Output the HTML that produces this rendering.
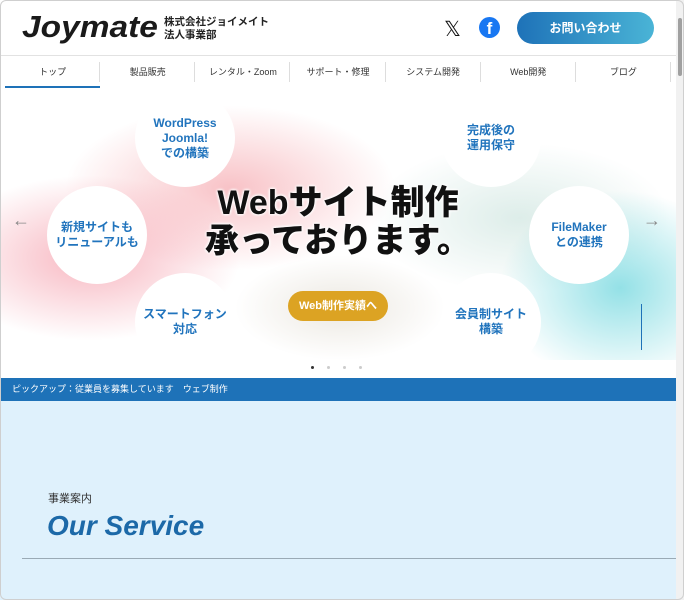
<!DOCTYPE html>
<html><head><meta charset="utf-8"><style>
*{margin:0;padding:0;box-sizing:border-box}
body{width:684px;height:600px;overflow:hidden;background:#fff;font-family:"Liberation Sans","Noto Sans CJK JP",sans-serif;position:relative}
.frame{position:absolute;inset:0;border:1px solid #cfcfcf;border-radius:6px;pointer-events:none;z-index:20}
.sb{position:absolute;right:0;top:0;width:8px;height:600px;background:#f1f1f1;z-index:10}
.sb i{position:absolute;left:2px;top:18px;width:4px;height:58px;background:#a0a0a0;border-radius:2px}
header{position:absolute;left:0;top:0;width:676px;height:56px;border-bottom:1px solid #e2e2e2}
.logo{position:absolute;left:22px;top:9px;font:italic 900 31px "Liberation Sans",sans-serif;letter-spacing:0;color:#1a1a1a;transform:scaleX(1.08);transform-origin:left}
.sub{position:absolute;left:164px;top:16px;font-size:10.5px;line-height:13px;color:#222;font-weight:bold}
.x{position:absolute;left:444px;top:17px;font-size:21px;color:#111}
.fb{position:absolute;left:479px;top:17px;width:21px;height:21px;border-radius:50%;background:#1877f2;color:#fff;font:bold 17px "Liberation Sans";text-align:center;line-height:24px;overflow:hidden}
.btn{position:absolute;left:517px;top:12px;width:137px;height:32px;border-radius:16px;background:linear-gradient(90deg,#1e72b8,#4ab4d6);color:#fff;font-size:12px;font-weight:bold;text-align:center;line-height:32px}
nav{position:absolute;left:5px;top:57px;width:666px;height:31px;display:flex}
nav div{flex:1;text-align:center;font-size:9px;color:#333;line-height:30px;position:relative}
nav div:after{content:"";position:absolute;right:0;top:5px;height:20px;border-right:1px solid #ddd}
nav div.on{border-bottom:2px solid #1e72b8}
.hero{position:absolute;left:0;top:88px;width:676px;height:272px;overflow:hidden;background:
radial-gradient(ellipse 200px 110px at 90px 170px,rgba(240,110,130,.5),transparent 75%),
radial-gradient(ellipse 220px 110px at 230px 100px,rgba(240,120,130,.45),transparent 75%),
radial-gradient(ellipse 160px 130px at 620px 200px,rgba(60,200,210,.55),transparent 75%),
radial-gradient(ellipse 200px 100px at 520px 130px,rgba(170,210,200,.4),transparent 75%),
radial-gradient(ellipse 140px 70px at 340px 220px,rgba(200,190,170,.35),transparent 75%),#fff}
.c{position:absolute;width:100px;height:98px;border-radius:50%;background:#fff;color:#2174bd;font-weight:bold;font-size:12px;line-height:15px;text-align:center;display:flex;align-items:center;justify-content:center}
.ttl{position:absolute;left:0;width:676px;top:96px;text-align:center;font-size:34px;font-weight:900;line-height:38px;color:#111;text-shadow:0 0 3px #fff,0 0 3px #fff,0 0 3px #fff}
.wb{position:absolute;left:288px;top:203px;width:100px;height:30px;border-radius:15px;background:#dca323;color:#fff;font-size:11px;font-weight:bold;text-align:center;line-height:30px}
.ar{position:absolute;top:122px;color:#888;font-size:18px}
.dots{position:absolute;top:366px;left:311px;font-size:0}
.dots i{display:inline-block;width:3px;height:3px;border-radius:50%;background:#ccc;margin-right:13px}
.dots i:first-child{background:#333}
.pick{position:absolute;left:0;top:378px;width:676px;height:23px;background:#1e72b8;color:#fff;font-size:9px;line-height:22px;padding-left:12px}
.svc{position:absolute;left:0;top:401px;width:676px;height:199px;background:#dff1fc}
.svc .j{position:absolute;left:48px;top:89px;font-size:11px;color:#333}
.svc .e{position:absolute;left:47px;top:109px;font:italic bold 28px "Liberation Sans",sans-serif;color:#1c69a8}
.svc .l{position:absolute;left:22px;top:157px;width:654px;border-top:1px solid #9aaab5}
</style></head><body>
<div class="frame"></div><div class="sb"><i></i></div>
<header>
<div class="logo">Joymate</div>
<div class="sub">株式会社ジョイメイト<br>法人事業部</div>
<div class="x">𝕏</div>
<div class="fb">f</div>
<div class="btn">お問い合わせ</div>
</header>
<nav><div class="on">トップ</div><div>製品販売</div><div>レンタル・Zoom</div><div>サポート・修理</div><div>システム開発</div><div>Web開発</div><div>ブログ</div></nav>
<div class="hero">
<div class="c" style="left:135px;top:1px">WordPress<br>Joomla!<br>での構築</div>
<div class="c" style="left:441px;top:1px">完成後の<br>運用保守</div>
<div class="c" style="left:47px;top:98px">新規サイトも<br>リニューアルも</div>
<div class="c" style="left:529px;top:98px">FileMaker<br>との連携</div>
<div class="c" style="left:135px;top:185px">スマートフォン<br>対応</div>
<div class="c" style="left:441px;top:185px">会員制サイト<br>構築</div>
<div class="ttl">Webサイト制作<br>承っております。</div>
<div class="wb">Web制作実績へ</div>
<div class="ar" style="left:12px">←</div><div class="ar" style="left:643px">→</div>
<div style="position:absolute;left:641px;top:216px;height:46px;border-left:1px solid #1e72b8"></div>
</div>
<div class="dots"><i></i><i></i><i></i><i></i></div>
<div class="pick">ピックアップ：従業員を募集しています　ウェブ制作</div>
<div class="svc"><div class="j">事業案内</div><div class="e">Our Service</div><div class="l"></div></div>
</body></html>
